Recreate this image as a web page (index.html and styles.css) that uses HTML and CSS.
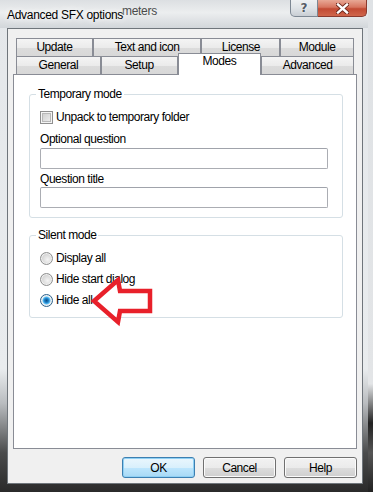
FILE: index.html
```html
<!DOCTYPE html>
<html lang="en">
<head>
    <meta charset="UTF-8">
    <meta name="viewport" content="width=device-width, initial-scale=1.0">
    <title>Advanced SFX options</title>
    <link rel="stylesheet" href="styles.css">
</head>
<body>

    <div class="screen">
        <div class="window">
            <div class="titlebar">
                <span class="ghost-title">meters</span>
                <span class="title">Advanced SFX options</span>
                <div class="caption-buttons">
                    <span class="cap cap-help">?</span>
                    <span class="cap cap-close">
                        <svg width="13" height="11" viewBox="0 0 13 11">
                            <path d="M2 1.5 L11 9.5 M11 1.5 L2 9.5" stroke="#6a2418" stroke-width="4.2" stroke-linecap="square"/>
                            <path d="M2 1.5 L11 9.5 M11 1.5 L2 9.5" stroke="#fff" stroke-width="2.4" stroke-linecap="square"/>
                        </svg>
                    </span>
                </div>
            </div>

            <div class="client">
                <div class="tabs">
                    <div class="tab-row">
                        <div class="tab w-update">Update</div>
                        <div class="tab w-text">Text and icon</div>
                        <div class="tab w-license">License</div>
                        <div class="tab w-module">Module</div>
                    </div>
                    <div class="tab-row">
                        <div class="tab w-general">General</div>
                        <div class="tab w-setup">Setup</div>
                        <div class="tab w-modes active">Modes</div>
                        <div class="tab w-advanced">Advanced</div>
                    </div>
                </div>

                <div class="tab-panel">
                    <div class="group group-temp">
                        <div class="group-title">Temporary mode</div>
                        <label class="option first">
                            <input type="checkbox" class="check">
                            <span>Unpack to temporary folder</span>
                        </label>
                        <div class="field-label label-question">Optional question</div>
                        <input type="text" class="text-input">
                        <div class="field-label label-title">Question title</div>
                        <input type="text" class="text-input">
                    </div>

                    <div class="group group-silent">
                        <div class="group-title">Silent mode</div>
                        <label class="option first">
                            <input type="radio" name="silent" class="radio">
                            <span>Display all</span>
                        </label>
                        <label class="option">
                            <input type="radio" name="silent" class="radio">
                            <span>Hide start dialog</span>
                        </label>
                        <label class="option">
                            <input type="radio" name="silent" class="radio" checked>
                            <span>Hide all</span>
                        </label>
                    </div>

                    <!-- red annotation arrow drawn over the dialog -->
                    <svg class="arrow" width="67" height="52" viewBox="0 0 67 52">
                        <polygon points="6,26 30,5 32,16 62,16 62,36 32,36 30,47" fill="none" stroke="#e8202a" stroke-width="4.5" stroke-linejoin="miter"/>
                    </svg>
                </div>

                <div class="buttons">
                    <button class="btn btn-default">OK</button>
                    <button class="btn">Cancel</button>
                    <button class="btn">Help</button>
                </div>
            </div>
        </div>
        <div class="desktop-edge"></div>
    </div>

</body>
</html>
```

FILE: styles.css
```css
body {
    margin: 0;
    font-family: 'Liberation Sans', Arial, sans-serif;
    font-size: 12px;
    letter-spacing: -0.45px;
    color: #000;
    background: #2e2f30;
}

.screen {
    display: flex;
    width: 373px;
    height: 492px;
    overflow: hidden;
}

.window {
    width: 368px;
    height: 492px;
    background: linear-gradient(to bottom, #e4e7ea 0, #e9ecee 75%, #b9bcbf 82%, #4a4b4c 92%, #2a2a2a 100%);
    display: flex;
    flex-direction: column;
}

.desktop-edge {
    flex: 1;
    background: linear-gradient(to bottom, #dfe2e5 0, #e3e5e7 78%, #222 86%, #555 92%, #222 100%);
}

/* title bar */
.titlebar {
    height: 28px;
    position: relative;
    display: flex;
    align-items: flex-start;
    background: linear-gradient(to bottom, #dcdfe2 0, #eceeef 45%, #d2d6da 100%);
}

.title {
    margin: 7px 0 0 7px;
    font-size: 12px;
    letter-spacing: -0.3px;
    line-height: 16px;
    text-shadow: 0 0 6px #fff, 0 0 10px #fff;
    position: relative;
}

.ghost-title {
    position: absolute;
    left: 122px;
    top: 3px;
    line-height: 16px;
    color: #4a4a4a;
    letter-spacing: -0.3px;
}

.caption-buttons {
    margin-left: auto;
    margin-right: 1px;
    display: flex;
}

.cap {
    height: 17px;
    box-sizing: border-box;
    display: flex;
    align-items: center;
    justify-content: center;
    border: 1px solid #7d8793;
    border-top: none;
    font-family: 'DejaVu Sans', sans-serif;
    letter-spacing: 0;
}

.cap-help {
    width: 28px;
    border-radius: 0 0 0 5px;
    background: linear-gradient(to bottom, #eef0f2 0, #dfe3e7 50%, #c9ced4 100%);
    color: #555c66;
    font-size: 12px;
    font-weight: bold;
    text-shadow: 0 0 2px #fff;
}

.cap-close {
    width: 49px;
    border-left: none;
    border-radius: 0 0 5px 0;
    border-color: #8a3a2e;
    background: linear-gradient(to bottom, #e8a895 0, #d7755f 45%, #c24a33 55%, #d0664b 100%);
}

/* dialog client area */
.client {
    margin: 0 5px 0 7px;
    height: 456px;
    box-sizing: border-box;
    border: 1px solid #6f757b;
    background: #f0f0f0;
    padding: 9px 5px 5px 5px;
    display: flex;
    flex-direction: column;
}

.tabs {
    padding: 0 3px;
}

.tab-row {
    display: flex;
    height: 18px;
}

.tab {
    box-sizing: border-box;
    height: 18px;
    border: 1px solid #898c95;
    border-bottom: none;
    background: linear-gradient(to bottom, #f4f4f4 0, #ebebeb 50%, #dcdcdc 51%, #d8d8d8 100%);
    text-align: center;
    line-height: 17px;
}

.tab.active {
    height: 22px;
    margin-top: -3px;
    background: #fff;
    line-height: 15px;
    position: relative;
    z-index: 1;
}

.w-update { width: 77px; }
.w-text { width: 109px; }
.w-license { width: 79px; }
.w-module { width: 74px; }
.w-general { width: 85px; }
.w-setup { width: 77px; }
.w-modes { width: 84px; }
.w-advanced { width: 93px; }

.tab-panel {
    height: 375px;
    box-sizing: border-box;
    border: 1px solid #898c95;
    background: #fff;
    position: relative;
}

/* group boxes */
.group {
    margin: 0 13px 0 15px;
    border: 1px solid #d5dfe5;
    border-radius: 3px;
    padding: 0 15px 9px 10px;
}

.group-temp {
    margin-top: 19px;
}

.group-silent {
    margin-top: 17px;
}

.group-title {
    display: table;
    margin: -9px 0 0 -4px;
    padding: 0 2px;
    background: #fff;
    line-height: 16px;
}

.option {
    display: flex;
    align-items: center;
    height: 16px;
    margin-top: 5px;
}

.option.first {
    margin-top: 7px;
}

.option span {
    margin-left: 3px;
}

.field-label {
    line-height: 16px;
    height: 16px;
}

.label-question {
    margin-top: 6px;
    margin-bottom: 1px;
}

.label-title {
    margin-top: 2px;
}

.text-input {
    display: block;
    box-sizing: border-box;
    width: 288px;
    height: 21px;
    margin: 0;
    border: 1px solid #abadb3;
    border-top-color: #a0a3ab;
    border-radius: 2px;
    background: #fff;
}

.check {
    appearance: none;
    margin: 0;
    width: 13px;
    height: 13px;
    box-sizing: border-box;
    border: 1px solid #8f8f8f;
    background: linear-gradient(135deg, #c9c9c9 0, #e2e2e2 60%, #f4f4f4 100%);
    box-shadow: inset 0 0 0 1px #f4f4f4, inset 0 0 0 2px #b8b8b8;
}

.radio {
    appearance: none;
    margin: 0;
    width: 13px;
    height: 13px;
    box-sizing: border-box;
    border: 1px solid #8e8f8f;
    border-radius: 50%;
    background: radial-gradient(circle at 60% 60%, #f4f4f4 0, #d8d8d8 55%, #c4c4c4 100%);
    box-shadow: inset 0 0 0 1px #f0f0f0;
}

.radio:checked {
    border-color: #2c628b;
    background: radial-gradient(circle, #0b4f86 0, #1c7cc4 2px, #5cc0f5 3.5px, #e9f1f6 4.5px, #dde3e8 100%);
}

.arrow {
    position: absolute;
    left: 74px;
    top: 200px;
}

/* bottom buttons */
.buttons {
    display: flex;
    justify-content: flex-end;
    gap: 8px;
    margin-top: 8px;
}

.btn {
    width: 73px;
    height: 21px;
    padding: 0;
    font-family: 'Liberation Sans', Arial, sans-serif;
    font-size: 12px;
    letter-spacing: -0.45px;
    color: #000;
    border: 1px solid #707070;
    border-radius: 3px;
    background: linear-gradient(to bottom, #f2f2f2 0, #ebebeb 50%, #dddddd 51%, #cfcfcf 100%);
    box-shadow: inset 0 0 0 1px #fbfbfb;
}

.btn-default {
    border-color: #3c7fb1;
    background: linear-gradient(to bottom, #eaf6fd 0, #d9f0fc 50%, #bee6fd 51%, #a7d9f5 100%);
    box-shadow: inset 0 0 0 1px #8fd0f4;
}
```
